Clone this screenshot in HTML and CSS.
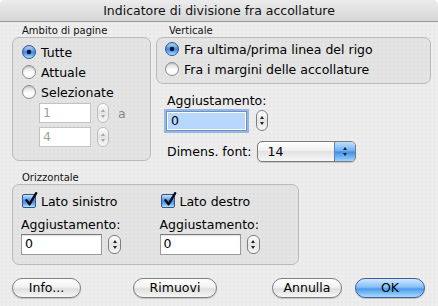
FILE: index.html
```html
<!DOCTYPE html>
<html>
<head>
<meta charset="utf-8">
<link rel="stylesheet" href="styles.css">
</head>
<body>
<div class="window">
  <div class="titlebar">Indicatore di divisione fra accollature</div>
  <div class="content">
    <div class="top">
      <section class="group g-ambito">
        <div class="glabel">Ambito di pagine</div>
        <div class="gbox">
          <div class="opt"><span class="radio on"></span>Tutte</div>
          <div class="opt"><span class="radio"></span>Attuale</div>
          <div class="opt"><span class="radio"></span>Selezionate</div>
          <div class="range">
            <div class="frow"><span class="field dis">1</span><span class="stepper dis"><i class="up"></i><i class="dn"></i></span><span class="a">a</span></div>
            <div class="frow"><span class="field dis">4</span><span class="stepper dis"><i class="up"></i><i class="dn"></i></span></div>
          </div>
        </div>
      </section>
      <div class="rightcol">
        <section class="group g-vert">
          <div class="glabel">Verticale</div>
          <div class="gbox">
            <div class="opt"><span class="radio on"></span>Fra ultima/prima linea del rigo</div>
            <div class="opt"><span class="radio"></span>Fra i margini delle accollature</div>
          </div>
        </section>
        <div class="lbl vadj">Aggiustamento:</div>
        <div class="frow vfrow"><span class="field focus"><span class="sel">0</span></span><span class="stepper"><i class="up"></i><i class="dn"></i></span></div>
        <div class="fontrow">
          <span class="lbl">Dimens. font:</span>
          <span class="popup"><span class="pval">14</span><span class="parrows"><i class="up"></i><i class="dn"></i></span></span>
        </div>
      </div>
    </div>
    <section class="group g-oriz">
      <div class="glabel">Orizzontale</div>
      <div class="gbox cols">
        <div class="col">
          <div class="chk"><span class="checkbox"><svg viewBox="0 0 16 16" width="16" height="16"><path d="M3.5 8.2 L6.6 12.2 L13.2 1.2" fill="none" stroke="#0a0a14" stroke-width="2.4" stroke-linecap="round" stroke-linejoin="round"/></svg></span>Lato sinistro</div>
          <div class="lbl cadj">Aggiustamento:</div>
          <div class="frow"><span class="field">0</span><span class="stepper"><i class="up"></i><i class="dn"></i></span></div>
        </div>
        <div class="col">
          <div class="chk"><span class="checkbox"><svg viewBox="0 0 16 16" width="16" height="16"><path d="M3.5 8.2 L6.6 12.2 L13.2 1.2" fill="none" stroke="#0a0a14" stroke-width="2.4" stroke-linecap="round" stroke-linejoin="round"/></svg></span>Lato destro</div>
          <div class="lbl cadj">Aggiustamento:</div>
          <div class="frow"><span class="field">0</span><span class="stepper"><i class="up"></i><i class="dn"></i></span></div>
        </div>
      </div>
    </section>
    <div class="buttons">
      <span class="btn b-info">Info...</span>
      <span class="btn b-rim">Rimuovi</span>
      <span class="btn b-ann">Annulla</span>
      <span class="btn b-ok">OK</span>
    </div>
  </div>
</div>
</body>
</html>
```

FILE: styles.css
```css
html, body {
  margin: 0;
  padding: 0;
  background: #ffffff;
}
body {
  width: 438px;
  height: 306px;
  overflow: hidden;
  font-family: "DejaVu Sans", "Noto Sans", sans-serif;
  font-size: 12px;
  color: #000;
}
.window {
  width: 438px;
  height: 306px;
  border-radius: 5px 5px 0 0;
  overflow: hidden;
  background-color: #ededed;
  background-image: radial-gradient(circle, #e3e3e3 0.6px, transparent 0.9px);
  background-size: 4px 4px;
}
.titlebar {
  height: 21px;
  line-height: 21px;
  text-align: center;
  font-size: 12.5px;
  color: #111;
  background: linear-gradient(#ececec, #d6d6d6);
  border-bottom: 1px solid #9c9c9c;
}
.content {
  padding: 3px 0 0 12px;
}
.top {
  display: flex;
  gap: 5px;
  height: 136px;
}
.group .glabel {
  height: 12px;
  line-height: 12px;
  font-size: 10px;
  padding-left: 10px;
  color: #111;
}
.gbox {
  border: 1px solid #bababa;
  border-radius: 7px;
  background: rgba(0, 0, 0, 0.035);
  box-sizing: border-box;
}
.g-ambito { width: 139px; }
.g-ambito .gbox {
  height: 124px;
  padding: 4px 0 0 9px;
}
.opt {
  height: 20px;
  display: flex;
  align-items: center;
  font-size: 12.5px;
}
.radio {
  width: 14px;
  height: 14px;
  box-sizing: border-box;
  border-radius: 50%;
  border: 1px solid #8c8c8c;
  background: linear-gradient(#d8d8d8, #ffffff 60%, #f4f4f4);
  box-shadow: inset 0 1px 1px rgba(0,0,0,0.15);
  margin-right: 5px;
  flex: none;
}
.radio.on {
  border-color: #35528a;
  background:
    radial-gradient(circle, #10122a 0 2px, transparent 2.6px),
    linear-gradient(#c6e3ff, #3f8ee6 50%, #5eaef6 75%, #bfe6ff);
}
.range {
  padding: 1px 0 0 17px;
}
.frow {
  display: flex;
  align-items: center;
}
.range .frow + .frow { margin-top: 4px; }
.field {
  box-sizing: border-box;
  height: 20px;
  width: 52px;
  background: #fff;
  border: 1px solid #9a9a9a;
  border-top-color: #7a7a7a;
  box-shadow: inset 0 1px 1px rgba(0,0,0,0.12);
  padding-left: 3px;
  line-height: 18px;
  font-size: 12.5px;
}
.field.dis {
  color: #a0a0a0;
  border-color: #c2c2c2;
  box-shadow: none;
}
.stepper {
  box-sizing: border-box;
  width: 12px;
  height: 20px;
  margin-left: 6px;
  border: 1px solid #7d7d7d;
  border-radius: 6px;
  background: linear-gradient(#ffffff, #e4e4e4 50%, #f6f6f6);
  display: flex;
  flex-direction: column;
  align-items: center;
  justify-content: center;
  gap: 3px;
}
.stepper.dis { border-color: #bdbdbd; }
.stepper i, .parrows i {
  display: block;
  width: 0;
  height: 0;
  border-left: 2.5px solid transparent;
  border-right: 2.5px solid transparent;
}
.stepper i.up, .parrows i.up { border-bottom: 3.5px solid #222; }
.stepper i.dn, .parrows i.dn { border-top: 3.5px solid #222; }
.stepper.dis i.up { border-bottom-color: #a8a8a8; }
.stepper.dis i.dn { border-top-color: #a8a8a8; }
.a {
  margin-left: 9px;
  color: #888;
  font-size: 12.5px;
}
.rightcol {
  width: 275px;
}
.g-vert .glabel { padding-left: 13px; }
.g-vert .gbox {
  height: 47px;
  padding: 1px 0 0 8px;
}
.lbl {
  font-size: 12.5px;
}
.vadj {
  margin-top: 8px;
  padding-left: 11px;
  height: 17px;
  line-height: 17px;
}
.vfrow {
  margin-top: 1px;
  padding-left: 10px;
}
.field.focus {
  width: 81px;
  border-color: #7191c2;
  box-shadow: 0 0 0 2px #93b8e8;
  padding: 1px;
  line-height: 16px;
  background: #fff;
}
.field.focus .sel {
  display: block;
  height: 16px;
  background: #b8d7fd;
  padding-left: 3px;
}
.vfrow .stepper { margin-left: 9px; height: 21px; }
.fontrow {
  display: flex;
  align-items: center;
  margin-top: 10px;
  padding-left: 11px;
}
.popup {
  margin-left: 6px;
  box-sizing: border-box;
  width: 99px;
  height: 21px;
  border: 1px solid #7a7a7a;
  border-radius: 5px;
  overflow: hidden;
  display: flex;
  background: linear-gradient(#ffffff, #f0f0f0 45%, #e2e2e2 50%, #f7f7f7);
  box-shadow: 0 1px 1px rgba(0,0,0,0.15);
}
.pval {
  flex: 1;
  padding-left: 9px;
  line-height: 19px;
  font-size: 12.5px;
}
.parrows {
  width: 20px;
  border-left: 1px solid #5a7fb8;
  background: linear-gradient(#c2e0ff, #6aaef2 48%, #3f8ee6 52%, #9fd3ff);
  display: flex;
  flex-direction: column;
  align-items: center;
  justify-content: center;
  gap: 3px;
}
.g-oriz {
  margin-top: 11px;
  width: 287px;
}
.g-oriz .gbox {
  height: 81px;
  display: flex;
  padding: 8px 0 0 8px;
}
.col { width: 155px; }
.chk {
  height: 16px;
  display: flex;
  align-items: center;
  font-size: 12.5px;
  padding-left: 1px;
}
.checkbox {
  position: relative;
  box-sizing: border-box;
  width: 14px;
  height: 14px;
  border: 1px solid #35528a;
  border-radius: 2px;
  background: linear-gradient(#c6e3ff, #3f8ee6 50%, #5eaef6 75%, #bfe6ff);
  margin-right: 5px;
  flex: none;
}
.checkbox svg {
  position: absolute;
  left: 0;
  top: -3px;
}
.cadj {
  margin-top: 8px;
  height: 16px;
  line-height: 16px;
}
.col .field { width: 81px; height: 21px; }
.col .frow { margin-top: 1px; }
.col .stepper { margin-left: 6px; height: 19px; width: 13px; }
.buttons {
  display: flex;
  margin-top: 13px;
}
.btn {
  box-sizing: border-box;
  height: 20px;
  line-height: 18px;
  text-align: center;
  border: 1px solid #7f7f7f;
  border-radius: 10px;
  font-size: 12.5px;
  background: linear-gradient(#ffffff, #f2f2f2 45%, #dedede 55%, #f6f6f6);
  box-shadow: 0 1px 1px rgba(0,0,0,0.18);
}
.b-info { width: 69px; }
.b-rim { width: 84px; margin-left: 52px; }
.b-ann { width: 70px; margin-left: 55px; }
.b-ok {
  width: 70px;
  margin-left: 13px;
  border-color: #3b5f9e;
  background: linear-gradient(#cfe7ff, #87c0f6 45%, #4d9bea 55%, #a9dcff);
}
```
